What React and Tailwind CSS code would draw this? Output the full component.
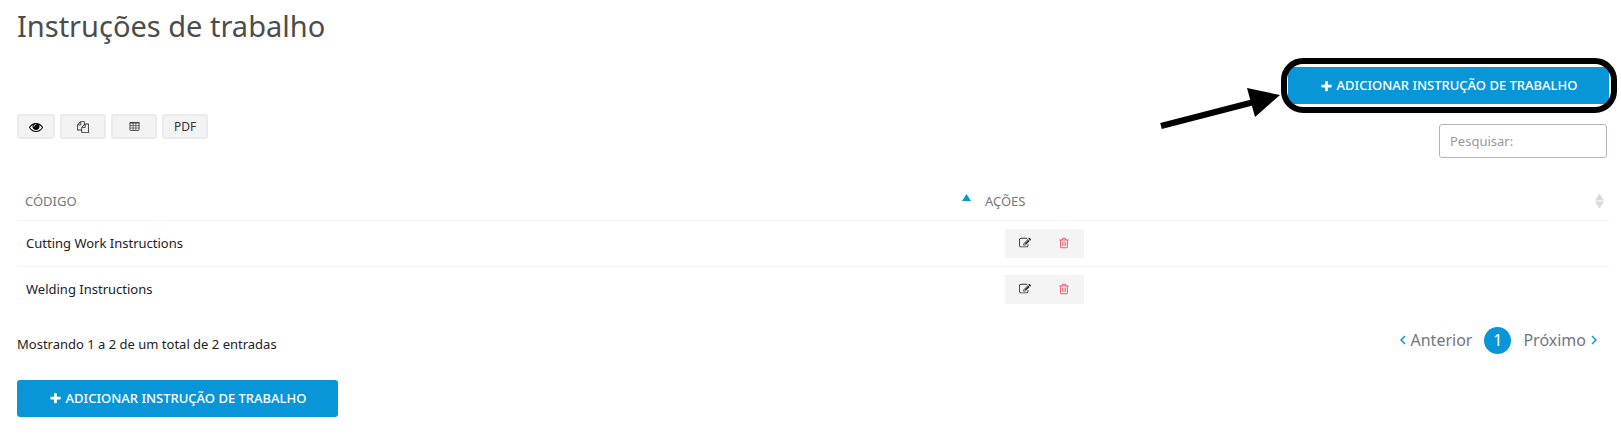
import React from "react";

const EYE =
  "M1664 960q-152-236-381-353 61 104 61 225 0 185-131.5 316.5t-316.5 131.5-316.5-131.5-131.5-316.5q0-121 61-225-229 117-381 353 133 205 333.5 326.5t434.5 121.5 434.5-121.5 333.5-326.5zm-720-384q0-20-14-34t-34-14q-125 0-214.5 89.5t-89.5 214.5q0 20 14 34t34 14 34-14 14-34q0-86 61-147t147-61q20 0 34-14t14-34zm848 384q0 34-20 69-140 230-376.5 368.5t-499.5 138.5-499.5-139-376.5-368q-20-35-20-69t20-69q140-229 376.5-368t499.5-139 499.5 139 376.5 368q20 35 20 69z";
const FILES =
  "M1696 384q40 0 68 28t28 68v1216q0 40-28 68t-68 28h-960q-40 0-68-28t-28-68v-288h-544q-40 0-68-28t-28-68v-672q0-40 20-88t48-76l408-408q28-28 76-48t88-20h416q40 0 68 28t28 68v328q68-40 128-40h416zm-544 213l-299 299h299v-299zm-640-384l-299 299h299v-299zm196 647l316-316v-416h-384v416q0 40-28 68t-68 28h-416v640h512v-256q0-40 20-88t48-76zm956 804v-1152h-384v416q0 40-28 68t-68 28h-416v640h896z";
const PLUS =
  "M1600 736v192q0 40-28 68t-68 28h-416v416q0 40-28 68t-68 28h-192q-40 0-68-28t-28-68v-416h-416q-40 0-68-28t-28-68v-192q0-40 28-68t68-28h416v-416q0-40 28-68t68-28h192q40 0 68 28t28 68v416h416q40 0 68 28t28 68z";
const EDIT =
  "M888 1184l116-116-152-152-116 116v56h96v96h56zm440-720q-16-16-33 1l-350 350q-17 17-1 33t33-1l350-350q17-17 1-33zm80 594v190q0 119-84.5 203.5t-203.5 84.5h-832q-119 0-203.5-84.5t-84.5-203.5v-832q0-119 84.5-203.5t203.5-84.5h832q63 0 117 25 15 7 18 23 3 17-9 29l-49 49q-14 14-32 8-23-6-45-6h-832q-66 0-113 47t-47 113v832q0 66 47 113t113 47h832q66 0 113-47t47-113v-126q0-13 9-22l64-64q15-15 35-7t20 29zm-96-738l288 288-672 672h-288v-288zm444 132l-92 92-288-288 92-92q28-28 68-28t68 28l152 152q28 28 28 68t-28 68z";
const TRASH =
  "M704 736v576q0 14-9 23t-23 9h-64q-14 0-23-9t-9-23v-576q0-14 9-23t23-9h64q14 0 23 9t9 23zm256 0v576q0 14-9 23t-23 9h-64q-14 0-23-9t-9-23v-576q0-14 9-23t23-9h64q14 0 23 9t9 23zm256 0v576q0 14-9 23t-23 9h-64q-14 0-23-9t-9-23v-576q0-14 9-23t23-9h64q14 0 23 9t9 23zm128 724v-948h-896v948q0 22 7 40.5t14.5 27 10.5 8.5h832q3 0 10.5-8.5t14.5-27 7-40.5zm-672-1076h448l-48-117q-7-9-17-11h-317q-10 2-17 11zm928 32v64q0 14-9 23t-23 9h-96v948q0 83-47 143.5t-113 60.5h-832q-66 0-113-58.5t-47-141.5v-952h-96q-14 0-23-9t-9-23v-64q0-14 9-23t23-9h309l70-167q15-37 54-63t79-26h320q40 0 79 26t54 63l70 167h309q14 0 23 9t9 23z";

function Icon({ d, className }) {
  return (
    <svg viewBox="0 0 1792 1792" fill="currentColor" aria-hidden="true" className={className}>
      <path d={d} />
    </svg>
  );
}

function GridIcon() {
  return (
    <svg viewBox="0 0 11 10" fill="none" stroke="currentColor" aria-hidden="true" className="h-[9px] w-[11px]">
      <rect x="0.5" y="0.5" width="10" height="9" rx="0.5" strokeWidth="0.9" />
      <path d="M0 1H11" strokeWidth="1.2" />
      <path d="M0 4H11M0 6.700H11M4 1V9.500M7 1V9.500" strokeWidth="0.7" />
    </svg>
  );
}

function Chevron({ d }) {
  return (
    <svg viewBox="0 0 6 10" fill="none" stroke="#0896d9" strokeWidth="1.5" aria-hidden="true" className="h-[10px] w-[6px]">
      <path d={d} />
    </svg>
  );
}

function AddButton() {
  return (
    <button
      type="button"
      className="flex h-[37px] w-[321px] items-center justify-center gap-1 rounded-[3px] bg-[#0896d9] pt-px text-[13px] font-medium whitespace-nowrap text-white"
    >
      <Icon d={PLUS} className="size-[13px]" />
      ADICIONAR INSTRUÇÃO DE TRABALHO
    </button>
  );
}

function ToolButton({ label, wide = true, children }) {
  return (
    <button
      type="button"
      aria-label={label}
      className={
        "flex h-[25px] items-center justify-center rounded-[3px] border-2 border-[#ebebeb] bg-[#f3f3f3] text-xs text-[#333] " +
        (wide ? "w-[46px]" : "w-[38px]")
      }
    >
      {children}
    </button>
  );
}

function Row({ name, last }) {
  return (
    <tr className={last ? "" : "border-b border-[#f5f5f5]"}>
      <td className="px-[9px] pt-[2px] text-[13px] text-[#222]">{name}</td>
      <td className="py-2 pl-7">
        <div className="flex h-[29px] w-[79px] bg-[#f4f4f4]">
          <button type="button" aria-label={"Editar " + name} className="flex flex-1 items-center justify-center text-[#333]">
            <Icon d={EDIT} className="size-[12px]" />
          </button>
          <button type="button" aria-label={"Excluir " + name} className="flex flex-1 items-center justify-center text-[#ef5865]">
            <Icon d={TRASH} className="size-[12px]" />
          </button>
        </div>
      </td>
    </tr>
  );
}

export default function App() {
  return (
    <main className="bg-white pt-[6px] pr-3 pb-6 pl-[17px] font-['Noto_Sans',sans-serif] text-[#222]">
      <h1 className="text-[29px] leading-10 text-[#4c4c4c]">Instruções de trabalho</h1>

      <div className="mt-[21px] flex justify-end">
        <div className="relative">
          <AddButton />
          <div className="pointer-events-none absolute -inset-y-[9px] -right-2 -left-[7px] rounded-[22px] border-[6px] border-black" />
          <svg viewBox="0 0 120 42" aria-hidden="true" className="absolute top-[20px] right-full mr-2 h-[42px] w-[120px]">
            <path d="M1 39L94 15" stroke="#000" strokeWidth="6" fill="none" />
            <path d="M87 1L120 8L95 30Z" fill="#000" />
          </svg>
        </div>
      </div>

      <div className="mt-[10px] flex items-start justify-between">
        <div className="flex gap-[5px]">
          <ToolButton label="Visualizar" wide={false}>
            <Icon d={EYE} className="size-[14px] text-black" />
          </ToolButton>
          <ToolButton label="Copiar">
            <Icon d={FILES} className="size-[12px]" />
          </ToolButton>
          <ToolButton label="Planilha">
            <GridIcon />
          </ToolButton>
          <ToolButton label="PDF">PDF</ToolButton>
        </div>
        <input
          type="search"
          aria-label="Pesquisar"
          placeholder="Pesquisar:"
          className="mt-[10px] mr-[2px] h-[34px] w-[168px] rounded-[3px] border border-[#b4b4bd] px-[10px] text-[13px] outline-none placeholder:text-[#999]"
        />
      </div>

      <table className="mt-[23px] w-full table-fixed border-collapse">
        <colgroup>
          <col className="w-[60.3%]" />
          <col />
        </colgroup>
        <thead>
          <tr className="h-[39px] border-b border-[#f5f5f5] text-left text-[13px] text-[#777]">
            <th scope="col" aria-sort="ascending" className="px-2 pt-[2px] font-normal">
              <div className="flex items-center justify-between">
                CÓDIGO
                <svg viewBox="0 0 9 16" aria-hidden="true" className="-mr-[2px] h-4 w-[9px]">
                  <path d="M0 8L4.500 1L9 8Z" fill="#0896d9" />
                </svg>
              </div>
            </th>
            <th scope="col" className="pt-[2px] pr-[5px] pl-2 font-normal">
              <div className="flex items-center justify-between">
                AÇÕES
                <svg viewBox="0 0 9 16" aria-hidden="true" className="h-4 w-[9px]">
                  <path d="M0 7.500L4.500 0.500L9 7.500ZM0 8.500L4.500 15.500L9 8.500Z" fill="#d9d9d9" />
                </svg>
              </div>
            </th>
          </tr>
        </thead>
        <tbody>
          <Row name="Cutting Work Instructions" />
          <Row name="Welding Instructions" last />
        </tbody>
      </table>

      <div className="mt-[15px] flex items-start justify-between">
        <p className="mt-[7px] text-[13px] leading-5">Mostrando 1 a 2 de um total de 2 entradas</p>
        <nav aria-label="Paginação" className="mr-3 flex items-center text-base text-[#73777f]">
          <a href="#anterior" className="mr-3 flex items-center gap-[5px]">
            <Chevron d="M5 1L1 5L5 9" />
            Anterior
          </a>
          <a href="#1" aria-current="page" className="flex size-[27px] items-center justify-center rounded-full bg-[#0896d9] text-white">
            1
          </a>
          <a href="#proximo" className="ml-3 flex items-center gap-[5px]">
            Próximo
            <Chevron d="M1 1L5 5L1 9" />
          </a>
        </nav>
      </div>

      <div className="mt-[26px]">
        <AddButton />
      </div>
    </main>
  );
}
